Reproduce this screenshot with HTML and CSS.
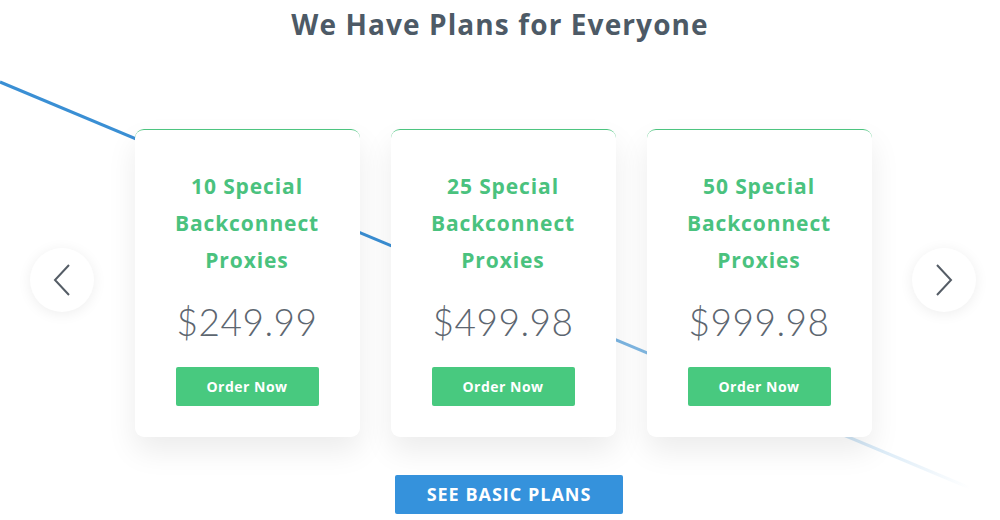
FILE: index.html
```html
<!DOCTYPE html>
<html>
<head>
    <title>Plans</title>
    <link rel="stylesheet" href="styles.css">
</head>
<body>
    <section class="plans">
        <svg class="plans-line" width="1000" height="520" viewBox="0 0 1000 520">
            <defs>
                <linearGradient id="lineFade" x1="0" y1="82" x2="970" y2="488" gradientUnits="userSpaceOnUse">
                    <stop offset="0" stop-color="#3a8fd4"/>
                    <stop offset="0.4" stop-color="#3a8fd4"/>
                    <stop offset="0.7" stop-color="#8cbfe6"/>
                    <stop offset="1" stop-color="#ffffff"/>
                </linearGradient>
            </defs>
            <line x1="0" y1="82" x2="970" y2="488" stroke="url(#lineFade)" stroke-width="3"/>
        </svg>

        <h1>We Have Plans for Everyone</h1>

        <div class="slider">
            <button class="arrow" aria-label="Previous">
                <svg width="20" height="34" viewBox="0 0 20 34"><polyline points="17,2 3,17 17,32" fill="none" stroke="#555d66" stroke-width="2"/></svg>
            </button>

            <div class="cards">
                <div class="card">
                    <h2>10 Special Backconnect Proxies</h2>
                    <div class="price">$249.99</div>
                    <a class="order" href="#">Order Now</a>
                </div>
                <div class="card">
                    <h2>25 Special Backconnect Proxies</h2>
                    <div class="price">$499.98</div>
                    <a class="order" href="#">Order Now</a>
                </div>
                <div class="card">
                    <h2>50 Special Backconnect Proxies</h2>
                    <div class="price">$999.98</div>
                    <a class="order" href="#">Order Now</a>
                </div>
            </div>

            <button class="arrow" aria-label="Next">
                <svg width="20" height="34" viewBox="0 0 20 34"><polyline points="3,2 17,17 3,32" fill="none" stroke="#555d66" stroke-width="2"/></svg>
            </button>
        </div>

        <a class="basic" href="#">SEE BASIC PLANS</a>
    </section>
</body>
</html>
```

FILE: styles.css
```css
* {
    margin: 0;
    padding: 0;
    box-sizing: border-box;
}

body {
    background: #fff;
    font-family: 'Open Sans', sans-serif;
    overflow: hidden;
}

.plans {
    position: relative;
    width: 1000px;
    height: 520px;
    display: flex;
    flex-direction: column;
    align-items: center;
}

.plans-line {
    position: absolute;
    left: 0;
    top: 0;
}

h1 {
    position: relative;
    margin-top: 5px;
    font-size: 28px;
    font-weight: 700;
    color: #4d5a66;
    letter-spacing: 1.1px;
}

.slider {
    position: relative;
    margin-top: 86px;
    width: 100%;
    padding: 0 24px 0 30px;
    display: flex;
    align-items: center;
    justify-content: space-between;
}

.arrow {
    width: 64px;
    height: 64px;
    margin-bottom: 6px;
    border-radius: 50%;
    border: none;
    background: #fff;
    box-shadow: 0 2px 14px rgba(0, 0, 0, 0.07);
    display: flex;
    align-items: center;
    justify-content: center;
    cursor: pointer;
}

.cards {
    display: flex;
    gap: 31px;
}

.card {
    width: 225px;
    height: 308px;
    background: #fff;
    border-radius: 9px;
    border-top: 1px solid #4cc47f;
    box-shadow: 0 14px 30px rgba(0, 0, 0, 0.08);
    display: flex;
    flex-direction: column;
    align-items: center;
    padding-top: 38px;
}

.card h2 {
    width: 190px;
    text-align: center;
    font-size: 21px;
    line-height: 37px;
    font-weight: 700;
    color: #4ac27e;
    letter-spacing: 0.9px;
}

.price {
    margin-top: 20px;
    font-family: 'Lato', sans-serif;
    font-size: 37px;
    font-weight: 300;
    color: #5d6670;
    letter-spacing: 0.5px;
}

.order {
    margin-top: 23px;
    width: 143px;
    height: 39px;
    line-height: 39px;
    text-align: center;
    background: #48c97f;
    border-radius: 2px;
    color: #fff;
    font-size: 14px;
    font-weight: 700;
    letter-spacing: 0.5px;
    text-decoration: none;
}

.basic {
    position: relative;
    margin-top: 38px;
    margin-left: 18px;
    width: 228px;
    height: 39px;
    line-height: 39px;
    text-align: center;
    background: #3592dc;
    border-radius: 2px;
    color: #fff;
    font-size: 18px;
    font-weight: 700;
    letter-spacing: 1px;
    text-decoration: none;
}
```
